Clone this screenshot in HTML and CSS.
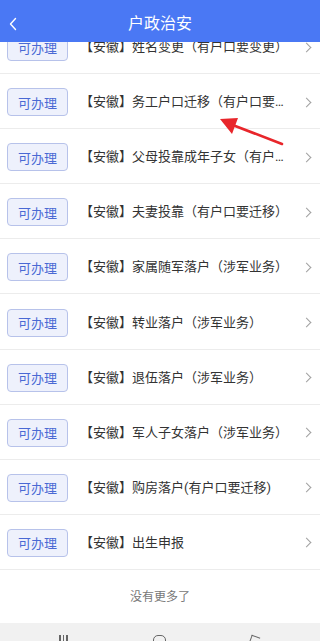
FILE: index.html
```html
<!DOCTYPE html>
<html lang="zh">
<head>
<meta charset="utf-8">
<link rel="stylesheet" href="styles.css">
</head>
<body>
<div class="app">
  <header class="topbar">
    <svg class="back" width="12" height="16" viewBox="0 0 12 16"><path d="M8.5 2.5 L3.5 8 L8.5 13.5" fill="none" stroke="#fff" stroke-width="1.4" stroke-linecap="round" stroke-linejoin="round"/></svg>
    <h1 class="title">户政治安</h1>
  </header>
  <main class="viewport">
    <ul class="list">
      <li class="row"><span class="btn">可办理</span><span class="name">【安徽】姓名变更（有户口要变更）</span><span class="chev"></span></li>
      <li class="row"><span class="btn">可办理</span><span class="name">【安徽】务工户口迁移（有户口要迁移）</span><span class="chev"></span></li>
      <li class="row"><span class="btn">可办理</span><span class="name">【安徽】父母投靠成年子女（有户口要迁移）</span><span class="chev"></span></li>
      <li class="row"><span class="btn">可办理</span><span class="name">【安徽】夫妻投靠（有户口要迁移）</span><span class="chev"></span></li>
      <li class="row"><span class="btn">可办理</span><span class="name">【安徽】家属随军落户（涉军业务）</span><span class="chev"></span></li>
      <li class="row"><span class="btn">可办理</span><span class="name">【安徽】转业落户（涉军业务）</span><span class="chev"></span></li>
      <li class="row"><span class="btn">可办理</span><span class="name">【安徽】退伍落户（涉军业务）</span><span class="chev"></span></li>
      <li class="row"><span class="btn">可办理</span><span class="name">【安徽】军人子女落户（涉军业务）</span><span class="chev"></span></li>
      <li class="row"><span class="btn">可办理</span><span class="name">【安徽】购房落户(有户口要迁移)</span><span class="chev"></span></li>
      <li class="row"><span class="btn">可办理</span><span class="name">【安徽】出生申报</span><span class="chev"></span></li>
    </ul>
    <div class="nomore">没有更多了</div>
    <svg class="arrow" width="80" height="40" viewBox="0 0 80 40"><line x1="72" y1="33" x2="20" y2="13" stroke="#e8262b" stroke-width="2.6" stroke-linecap="round"/><polygon points="10,8 28,7 22,23" fill="#e8262b"/></svg>
  </main>
  <nav class="sysnav">
    <span class="ico-menu"><i></i><i></i><i></i></span>
    <span class="ico-home"></span>
    <span class="ico-back"></span>
  </nav>
</div>
</body>
</html>
```
FILE: styles.css
```css
* { box-sizing: border-box; margin: 0; padding: 0; }
html, body { width: 320px; height: 641px; overflow: hidden; background: #fff; }
body { font-family: "Noto Sans CJK SC", "Noto Sans", sans-serif; color: #333; }
.app { display: flex; flex-direction: column; height: 641px; }
.topbar {
  height: 42px; flex: none; background: #4a78f4; position: relative; z-index: 2;
  display: flex; align-items: center; justify-content: center;
}
.back { position: absolute; left: 7px; top: 16px; }
.title { font-size: 16px; font-weight: normal; color: #fff; line-height: 1; margin-top: 1px; }
.viewport { flex: 1; overflow: hidden; position: relative; }
.list { list-style: none; margin-top: -23px; }
.row {
  height: 55.1px; border-bottom: 1px solid #ececec;
  display: flex; align-items: center; padding-left: 7px; padding-top: 2px;
}
.btn {
  flex: none; width: 61px; height: 28px; border: 1px solid #b7c2ea; border-radius: 4px;
  background: #eef1fc; color: #4a69d4; font-size: 13px;
  display: flex; align-items: center; justify-content: center;
}
.name {
  width: 210px; margin-left: 12px; font-size: 13px; color: #333;
  font-family: Roboto, "Noto Sans CJK SC", sans-serif;
  white-space: nowrap; overflow: hidden; text-overflow: ellipsis; line-height: 18px;
}
.chev {
  width: 7px; height: 7px; border-top: 1.2px solid #a0a0a0; border-right: 1.2px solid #a0a0a0;
  transform: rotate(45deg); margin-left: 13px;
}
.nomore { height: 54px; display: flex; align-items: center; justify-content: center; font-size: 12px; color: #777; margin-top: -1px; }
.arrow { position: absolute; left: 210px; top: 69px; }
.sysnav {
  height: 18px; flex: none; background: #f1f1f1; position: relative; overflow: hidden;
}
.ico-menu { position: absolute; left: 59px; top: 12px; display: flex; gap: 2px; }
.ico-menu i { display: block; width: 1.5px; height: 10px; background: #666; }
.ico-home { position: absolute; left: 153px; top: 12px; width: 13px; height: 14px; border: 1.5px solid #666; border-radius: 5px; }
.ico-back { position: absolute; left: 250px; top: 13px; width: 9px; height: 9px; border-left: 1.5px solid #666; border-top: 1.5px solid #666; transform: rotate(20deg); }
```
